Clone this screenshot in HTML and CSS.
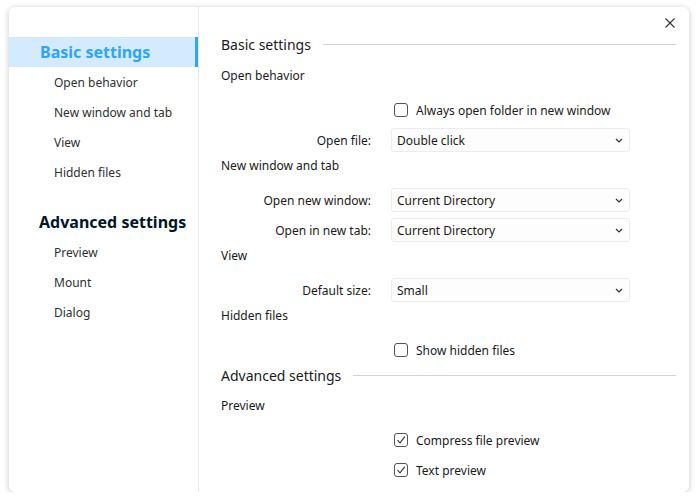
FILE: index.html
```html
<!DOCTYPE html>
<html>
<head>
<meta charset="utf-8">
<link rel="stylesheet" href="styles.css">
</head>
<body>
<div class="window">
  <nav class="sidebar">
    <div class="nav-group active">Basic settings</div>
    <div class="nav-item">Open behavior</div>
    <div class="nav-item">New window and tab</div>
    <div class="nav-item">View</div>
    <div class="nav-item">Hidden files</div>
    <div class="nav-group second">Advanced settings</div>
    <div class="nav-item">Preview</div>
    <div class="nav-item">Mount</div>
    <div class="nav-item">Dialog</div>
  </nav>
  <main class="content">
    <button class="close" aria-label="Close">
      <svg width="10" height="10" viewBox="0 0 10 10"><path d="M0.5 0.5L9.5 9.5M9.5 0.5L0.5 9.5" stroke="#333" stroke-width="1.1" fill="none"/></svg>
    </button>

    <div class="section-title"><span>Basic settings</span><i class="rule"></i></div>

    <div class="group-title first">Open behavior</div>
    <div class="items">
      <div class="row"><span class="label"></span><label class="check"><span class="box"></span>Always open folder in new window</label></div>
      <div class="row"><span class="label">Open file:</span><div class="select">Double click<svg class="chev" width="8" height="5" viewBox="0 0 8 5"><path d="M1 1L4 4L7 1" stroke="#333" stroke-width="1.2" fill="none"/></svg></div></div>
    </div>

    <div class="group-title">New window and tab</div>
    <div class="items">
      <div class="row"><span class="label">Open new window:</span><div class="select">Current Directory<svg class="chev" width="8" height="5" viewBox="0 0 8 5"><path d="M1 1L4 4L7 1" stroke="#333" stroke-width="1.2" fill="none"/></svg></div></div>
      <div class="row"><span class="label">Open in new tab:</span><div class="select">Current Directory<svg class="chev" width="8" height="5" viewBox="0 0 8 5"><path d="M1 1L4 4L7 1" stroke="#333" stroke-width="1.2" fill="none"/></svg></div></div>
    </div>

    <div class="group-title">View</div>
    <div class="items">
      <div class="row"><span class="label">Default size:</span><div class="select">Small<svg class="chev" width="8" height="5" viewBox="0 0 8 5"><path d="M1 1L4 4L7 1" stroke="#333" stroke-width="1.2" fill="none"/></svg></div></div>
    </div>

    <div class="group-title">Hidden files</div>
    <div class="items">
      <div class="row"><span class="label"></span><label class="check"><span class="box"></span>Show hidden files</label></div>
    </div>

    <div class="section-title"><span>Advanced settings</span><i class="rule"></i></div>

    <div class="group-title first tight">Preview</div>
    <div class="items">
      <div class="row"><span class="label"></span><label class="check"><span class="box checked"><svg width="14" height="14" viewBox="0 0 14 14"><path d="M3.5 7.2L6 9.8L10.8 3.6" stroke="#333" stroke-width="1.1" fill="none"/></svg></span>Compress file preview</label></div>
      <div class="row"><span class="label"></span><label class="check"><span class="box checked"><svg width="14" height="14" viewBox="0 0 14 14"><path d="M3.5 7.2L6 9.8L10.8 3.6" stroke="#333" stroke-width="1.1" fill="none"/></svg></span>Text preview</label></div>
    </div>
  </main>
</div>
</body>
</html>
```

FILE: styles.css
```css
html, body {
  margin: 0;
  padding: 0;
  background: #ffffff;
  font-family: "Noto Sans", "Open Sans", sans-serif;
}

.window {
  margin: 7px 0 0 9px;
  width: 680px;
  height: 485px;
  background: #ffffff;
  border-radius: 6px;
  box-shadow: 0 1px 6px rgba(0, 0, 0, 0.22);
  display: flex;
  overflow: hidden;
}

.sidebar {
  width: 190px;
  flex: none;
  border-right: 1px solid #e9e9e9;
  padding-top: 30px;
  box-sizing: border-box;
}

.nav-group {
  height: 30px;
  line-height: 30px;
  padding-left: 31px;
  font-size: 16px;
  font-weight: 700;
  color: #00162c;
}

.nav-group.active {
  background: #d4eafe;
  color: #2ea5f7;
  border-right: 3px solid #2ea5f7;
}

.nav-group.second {
  margin-top: 20px;
  padding-left: 30px;
}

.nav-item {
  height: 30px;
  box-sizing: border-box;
  padding-top: 2px;
  line-height: 28px;
  padding-left: 45px;
  font-size: 12px;
  color: #303030;
}

.content {
  flex: 1;
  position: relative;
  padding: 27px 13px 0 22px;
  box-sizing: border-box;
}

.close {
  position: absolute;
  top: 11px;
  right: 14px;
  width: 10px;
  height: 10px;
  padding: 0;
  border: none;
  background: none;
  display: flex;
}

.section-title {
  height: 22px;
  box-sizing: border-box;
  padding-bottom: 2px;
  display: flex;
  align-items: center;
  gap: 12px;
  font-size: 14px;
  color: #1a1a1a;
}

.section-title .rule {
  flex: 1;
  height: 1px;
  background: #d2d2d2;
  margin-top: 1px;
}

.group-title {
  height: 20px;
  box-sizing: border-box;
  padding-top: 2px;
  line-height: 18px;
  font-size: 12px;
  color: #1a1a1a;
}

.group-title.first {
  margin-top: 9px;
}

.group-title.tight {
  margin-top: 8px;
}

.items {
  padding-top: 10px;
}

.row {
  height: 30px;
  display: grid;
  grid-template-columns: 150px 239px;
  column-gap: 20px;
  align-items: center;
  font-size: 12px;
  color: #1a1a1a;
}

.label {
  text-align: right;
}

.select {
  height: 24px;
  box-sizing: border-box;
  border: 1px solid #ececec;
  border-radius: 3px;
  background: #fdfdfd;
  display: flex;
  align-items: center;
  justify-content: space-between;
  padding: 0 5px 0 5px;
}

.chev {
  margin-right: 1px;
}

.check {
  display: flex;
  align-items: center;
  gap: 8px;
  padding-left: 3px;
}

.box {
  width: 14px;
  height: 14px;
  box-sizing: border-box;
  border: 1px solid #555;
  border-radius: 3px;
  display: block;
  position: relative;
}

.box svg {
  position: absolute;
  left: -1px;
  top: -1px;
}
```
